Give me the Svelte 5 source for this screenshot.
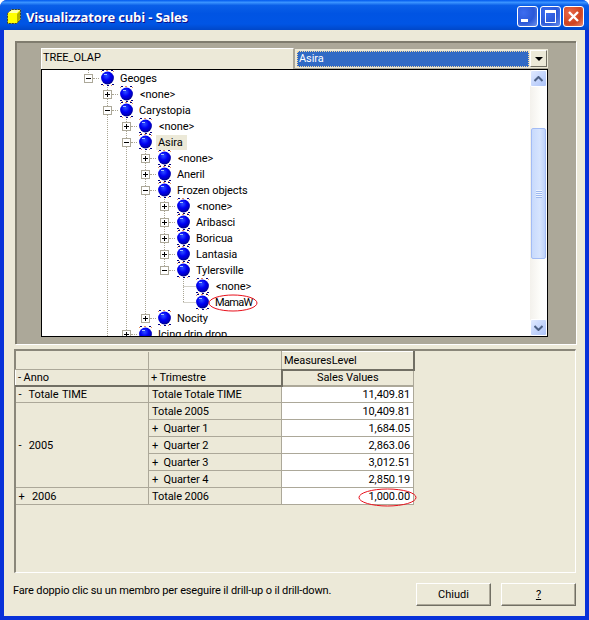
<script lang="ts">
	type Node = { label: string; depth: number; box?: '+' | '-'; selected?: boolean };

	const nodes: Node[] = [
		{ label: 'Geoges', depth: 0, box: '-' },
		{ label: '<none>', depth: 1, box: '+' },
		{ label: 'Carystopia', depth: 1, box: '-' },
		{ label: '<none>', depth: 2, box: '+' },
		{ label: 'Asira', depth: 2, box: '-', selected: true },
		{ label: '<none>', depth: 3, box: '+' },
		{ label: 'Aneril', depth: 3, box: '+' },
		{ label: 'Frozen objects', depth: 3, box: '-' },
		{ label: '<none>', depth: 4, box: '+' },
		{ label: 'Aribasci', depth: 4, box: '+' },
		{ label: 'Boricua', depth: 4, box: '+' },
		{ label: 'Lantasia', depth: 4, box: '+' },
		{ label: 'Tylersville', depth: 4, box: '-' },
		{ label: '<none>', depth: 5 },
		{ label: 'MamaW', depth: 5 },
		{ label: 'Nocity', depth: 3, box: '+' },
		{ label: 'Icing drip drop', depth: 2, box: '+' }
	];

	// vertical guides of the tree: x inside the list, first and last row
	const guides = [
		{ x: 46, y1: 0, y2: 9 },
		{ x: 65, y1: 9, y2: 267 },
		{ x: 84, y1: 41, y2: 267 },
		{ x: 103, y1: 73, y2: 249 },
		{ x: 122, y1: 121, y2: 201 },
		{ x: 141, y1: 201, y2: 233 }
	];

	const rows = [
		{ year: '-  Totale TIME', span: 1, quarter: 'Totale Totale TIME', value: '11,409.81' },
		{ year: '-  2005', span: 5, quarter: 'Totale 2005', value: '10,409.81' },
		{ quarter: '+  Quarter 1', value: '1,684.05' },
		{ quarter: '+  Quarter 2', value: '2,863.06' },
		{ quarter: '+  Quarter 3', value: '3,012.51' },
		{ quarter: '+  Quarter 4', value: '2,850.19' },
		{ year: '+  2006', span: 1, quarter: 'Totale 2006', value: '1,000.00', circled: true }
	];
</script>

{#snippet sphere()}
	<svg class="sphere" width="19" height="16" viewBox="0 0 19 16">
		<defs>
			<radialGradient id="ball" cx="0.42" cy="0.34" r="0.66">
				<stop offset="0" stop-color="#2c50ff" />
				<stop offset="0.5" stop-color="#0000f4" />
				<stop offset="0.85" stop-color="#0000b8" />
				<stop offset="1" stop-color="#000080" />
			</radialGradient>
		</defs>
		<circle cx="9.5" cy="8" r="6.4" fill="url(#ball)" />
		<rect x="6" y="4" width="3" height="1" fill="#a8c0ff" />
		<rect x="3" y="1" width="1" height="1" fill="#e8905a" />
		<rect x="4" y="0" width="2" height="1" fill="#000080" />
		<rect x="8" y="0" width="2" height="1" fill="#e8905a" />
		<rect x="13" y="0" width="2" height="1" fill="#000080" />
		<rect x="15" y="1" width="1" height="1" fill="#e8905a" />
		<rect x="3" y="14" width="2" height="1" fill="#000080" />
		<rect x="5" y="15" width="1" height="1" fill="#e8905a" />
		<rect x="9" y="15" width="2" height="1" fill="#000080" />
		<rect x="13" y="15" width="1" height="1" fill="#e8905a" />
		<rect x="14" y="14" width="2" height="1" fill="#000080" />
	</svg>
{/snippet}

<div class="window">
	<header class="titlebar">
		<svg class="cube" width="16" height="17" viewBox="0 0 16 17">
			<path d="M1.5 5.5 L5.5 1.5 H14.5 V11.5 L10.5 15.5 H1.5 Z" fill="#ffff00" stroke="#3a3a30" stroke-dasharray="2 1" />
			<path d="M2 5 L6 2 H14 L11 5 Z" fill="#ffffb0" />
			<path d="M11 6 L14 3 V11 L11 15 Z" fill="#b0b000" />
		</svg>
		<span class="title">Visualizzatore cubi - Sales</span>
		<div class="caption-buttons">
			<button class="cap" aria-label="minimize"><i class="min"></i></button>
			<button class="cap" aria-label="maximize"><i class="max"></i></button>
			<button class="cap close" aria-label="close">
				<svg width="13" height="13" viewBox="0 0 13 13"><path d="M2 2 L11 11 M11 2 L2 11" stroke="#fff" stroke-width="2.4" /></svg>
			</button>
		</div>
	</header>

	<main class="body">
		<section class="tree-panel">
			<div class="tree-head">
				<div class="cube-name">TREE_OLAP</div>
				<div class="combo">
					<div class="combo-value"><span>Asira</span></div>
					<div class="combo-arrow"><i></i></div>
				</div>
			</div>
			<div class="list">
				<div class="tree">
					<svg class="guides" width="490" height="267">
						{#each guides as g}
							<line x1={g.x + 0.5} x2={g.x + 0.5} y1={g.y1} y2={g.y2} />
						{/each}
						<line x1="141.5" x2="154" y1="216.5" y2="216.5" />
						<line x1="141.5" x2="154" y1="232.5" y2="232.5" />
					</svg>
					{#each nodes as node}
						<div class="node" style="padding-left: {42 + node.depth * 19}px">
							<span class="expander">
								{#if node.box}
									<span class="box">
										<i class="h"></i>
										{#if node.box === '+'}<i class="v"></i>{/if}
									</span>
									<span class="stub"></span>
								{/if}
							</span>
							{@render sphere()}
							<span class="label" class:selected={node.selected} class:none={node.label === '<none>'} class:tight={node.label === 'MamaW'}>
								{node.label}
								{#if node.label === 'MamaW'}
									<svg class="ring tree-ring" width="50" height="18" viewBox="0 0 50 18"><ellipse cx="25" cy="9" rx="24" ry="8" /></svg>
								{/if}
							</span>
						</div>
					{/each}
				</div>
				<div class="scrollbar">
					<div class="sb-btn">
						<svg width="9" height="6" viewBox="0 0 9 6"><path d="M0.5 5 L4.5 1 L8.5 5" fill="none" stroke="#4d6185" stroke-width="2" /></svg>
					</div>
					<div class="sb-track">
						<div class="sb-thumb"><i></i><i></i><i></i><i></i></div>
					</div>
					<div class="sb-btn">
						<svg width="9" height="6" viewBox="0 0 9 6"><path d="M0.5 1 L4.5 5 L8.5 1" fill="none" stroke="#4d6185" stroke-width="2" /></svg>
					</div>
				</div>
			</div>
		</section>

		<section class="grid-panel">
			<table>
				<colgroup>
					<col class="c1" />
					<col class="c2" />
					<col class="c3" />
				</colgroup>
				<thead>
					<tr class="head-top">
						<th></th>
						<th></th>
						<th class="raised">MeasuresLevel</th>
					</tr>
					<tr class="head-bottom">
						<th class="raised flat">- Anno</th>
						<th class="raised">+ Trimestre</th>
						<th class="measure">Sales Values</th>
					</tr>
				</thead>
				<tbody>
					{#each rows as row}
						<tr>
							{#if row.year}
								<td rowspan={row.span}><span class="pre year">{row.year}</span></td>
							{/if}
							<td><span class="pre">{row.quarter}</span></td>
							<td class="value">
								{row.value}
								{#if row.circled}
									<svg class="ring value-ring" width="59" height="19" viewBox="0 0 59 19"><ellipse cx="29.5" cy="9.5" rx="28.5" ry="8.5" /></svg>
								{/if}
							</td>
						</tr>
					{/each}
				</tbody>
			</table>
		</section>

		<footer class="foot">
			<p>Fare doppio clic su un membro per eseguire il drill-up o il drill-down.</p>
			<div class="actions">
				<button class="btn">Chiudi</button>
				<button class="btn"><u>?</u></button>
			</div>
		</footer>
	</main>
</div>

<style>
	:global(body) {
		margin: 0;
		background: #fff;
	}

	.window {
		width: 589px;
		height: 620px;
		display: flex;
		flex-direction: column;
		background: #0831d9;
		border-radius: 7px 7px 0 0;
		font-family: Roboto, 'Liberation Sans', sans-serif;
		font-size: 11px;
		letter-spacing: -0.08px;
		color: #000;
		overflow: hidden;
	}

	.titlebar {
		height: 30px;
		flex: none;
		box-sizing: border-box;
		display: flex;
		align-items: center;
		padding: 3px 5px 0 6px;
		background: linear-gradient(180deg, #0058ee 0%, #3a93ff 8%, #0a5fe8 18%, #0054e3 45%, #0055e5 80%, #0047c8 100%);
	}

	.cube {
		flex: none;
		margin-right: 4px;
	}

	.title {
		font-family: 'Open Sans', sans-serif;
		font-weight: 700;
		font-size: 13px;
		letter-spacing: -0.15px;
		color: #fff;
		text-shadow: 1px 1px 0 #0f1089;
	}

	.caption-buttons {
		margin-left: auto;
		display: flex;
		gap: 2px;
		margin-top: -1px;
	}

	.cap {
		width: 21px;
		height: 21px;
		padding: 0;
		border: 1px solid #fff;
		border-radius: 3px;
		background: radial-gradient(circle at 30% 30%, #3c6df0 0%, #2a58d8 55%, #6e93ec 100%);
		display: flex;
		align-items: center;
		justify-content: center;
	}

	.cap.close {
		background: radial-gradient(circle at 30% 30%, #e8694a 0%, #d0431f 60%, #e59078 100%);
	}

	.min {
		width: 7px;
		height: 3px;
		background: #fff;
		margin: 9px 6px 0 0;
	}

	.max {
		width: 9px;
		height: 9px;
		border: 1px solid #fff;
		border-top-width: 3px;
		box-sizing: content-box;
	}

	.body {
		flex: 1;
		min-height: 0;
		margin: 0 4px 4px;
		background: #ece9d8;
		padding: 11px 9px 0 11px;
		display: flex;
		flex-direction: column;
	}

	.tree-panel {
		height: 303px;
		flex: none;
		box-sizing: border-box;
		background: #aca899;
		border-top: 2px solid #7f7c6e;
		border-left: 2px solid #7f7c6e;
		padding: 5px 0 0 24px;
		box-shadow: 1px 1px 0 #fff;
	}

	.tree-head {
		display: flex;
		width: 507px;
		height: 21px;
	}

	.cube-name {
		width: 253px;
		flex: none;
		box-sizing: border-box;
		background: #ece9d8;
		border-top: 1px solid #fff;
		border-left: 1px solid #fff;
		border-right: 1px solid #aca899;
		padding: 2px 0 0 1px;
		line-height: 13px;
	}

	.combo {
		flex: 1;
		display: flex;
		box-sizing: border-box;
		margin: 1px 0 1px 1px;
		padding: 1px 1px 1px 2px;
		background: #ece9d8;
	}

	.combo-value {
		flex: 1;
		margin-top: 1px;
		background: #316ac5;
		color: #fff;
		outline: 1px dotted #f4d9a0;
		outline-offset: -1px;
		padding: 1px 0 0 2px;
		line-height: 13px;
	}

	.combo-arrow {
		width: 17px;
		margin-left: 1px;
		box-sizing: border-box;
		display: flex;
		align-items: center;
		justify-content: center;
		background: #ece9d8;
		border: 1px solid;
		border-color: #fff #716f64 #716f64 #fff;
	}

	.combo-arrow i {
		width: 0;
		height: 0;
		border: 4px solid transparent;
		border-top: 4px solid #000;
		border-bottom: 0;
	}

	.list {
		width: 507px;
		height: 268px;
		box-sizing: border-box;
		background: #fff;
		border: 1px solid #000;
		display: flex;
	}

	.tree {
		flex: 1;
		min-width: 0;
		position: relative;
		overflow: hidden;
		height: 266px;
	}

	.guides {
		position: absolute;
		left: 0;
		top: 0;
	}

	.guides line {
		stroke: #a9a594;
		stroke-width: 1;
		stroke-dasharray: 1 1;
	}

	.node {
		height: 16px;
		display: flex;
		align-items: center;
		position: relative;
	}

	.expander {
		width: 15px;
		height: 16px;
		flex: none;
		display: flex;
		align-items: center;
	}

	.box {
		width: 9px;
		height: 9px;
		box-sizing: border-box;
		flex: none;
		border: 1px solid #aca899;
		background: #fff;
		position: relative;
	}

	.box i {
		position: absolute;
		background: #000;
	}

	.box .h {
		left: 1px;
		top: 3px;
		width: 5px;
		height: 1px;
	}

	.box .v {
		left: 3px;
		top: 1px;
		width: 1px;
		height: 5px;
	}

	.stub {
		width: 6px;
		flex: none;
		border-top: 1px dotted #a9a594;
	}

	.sphere {
		flex: none;
		display: block;
		margin-left: -1px;
	}

	.label {
		position: relative;
		margin-left: 1px;
		padding: 1px 2px;
		line-height: 13px;
		white-space: pre;
	}

	.label.none {
		margin-left: 2px;
	}

	.label.tight {
		letter-spacing: -0.7px;
	}

	.label.selected {
		background: #ece9d8;
	}

	.ring {
		position: absolute;
		pointer-events: none;
	}

	.ring ellipse {
		fill: none;
		stroke: #e8101c;
		stroke-width: 1;
	}

	.tree-ring {
		left: -5px;
		top: -1px;
	}

	.value-ring {
		right: -4px;
		top: 0;
	}

	.scrollbar {
		width: 17px;
		flex: none;
		display: flex;
		flex-direction: column;
		background: linear-gradient(90deg, #f3f1ec 0%, #fdfdfa 60%, #fff 100%);
	}

	.sb-btn {
		height: 17px;
		flex: none;
		box-sizing: border-box;
		display: flex;
		align-items: center;
		justify-content: center;
		border: 1px solid #fff;
		border-radius: 2px;
		background: linear-gradient(135deg, #e1eafe 0%, #c0d2fb 60%, #aec4f8 100%);
	}

	.sb-track {
		flex: 1;
		padding-top: 41px;
	}

	.sb-thumb {
		height: 131px;
		box-sizing: border-box;
		margin: 0 1px;
		border: 1px solid #a3bcf5;
		border-radius: 2px;
		background: linear-gradient(90deg, #c8dafc 0%, #d6e4fe 60%, #bed2fb 100%);
		display: flex;
		flex-direction: column;
		justify-content: center;
		align-items: center;
		gap: 1px;
	}

	.sb-thumb i {
		width: 6px;
		height: 1px;
		background: #eef4ff;
		box-shadow: 0 1px 0 #9db8ef;
	}

	.grid-panel {
		margin-top: 5px;
		margin-left: -1px;
		width: 562px;
		height: 224px;
		flex: none;
		box-sizing: border-box;
		border-top: 2px solid #8a877a;
		border-left: 2px solid #8a877a;
		border-right: 1px solid #fff;
		border-bottom: 1px solid #fff;
	}

	table {
		border-collapse: collapse;
		table-layout: fixed;
		width: 398px;
		margin-left: -1px;
		font-size: 11px;
	}

	.c1,
	.c2 {
		width: 133px;
	}

	.c3 {
		width: 132px;
	}

	th,
	td {
		height: 17px;
		box-sizing: border-box;
		padding: 0 2px;
		font-weight: 400;
		text-align: left;
		border-right: 1px solid #aca899;
		border-bottom: 1px solid #aca899;
		line-height: 13px;
		white-space: nowrap;
	}

	.head-top th {
		height: 18px;
	}

	.head-bottom th {
		height: 16px;
	}

	th.raised {
		border-top: 1px solid #fff;
		border-left: 1px solid #fff;
		border-right: 2px solid #716f64;
		border-bottom: 2px solid #716f64;
	}

	th.raised.flat {
		border-right: 1px solid #aca899;
	}

	th.measure {
		text-align: center;
		border-bottom: 2px solid #aca899;
	}

	td {
		padding-left: 3px;
	}

	.pre {
		white-space: pre;
	}

	.pre.year {
		word-spacing: 1px;
	}

	td.value {
		background: #fff;
		text-align: right;
		padding-right: 3px;
		position: relative;
	}

	.foot {
		flex: 1;
		display: flex;
		justify-content: space-between;
		padding: 10px 0 0 0;
		margin-left: -2px;
	}

	.foot p {
		margin: 0;
		padding-top: 1px;
		line-height: 13px;
		letter-spacing: -0.14px;
	}

	.actions {
		display: flex;
		gap: 10px;
	}

	.btn {
		width: 75px;
		height: 23px;
		padding: 0;
		font: inherit;
		color: #000;
		background: #ece9d8;
		border: 1px solid;
		border-color: #fff #716f64 #716f64 #fff;
		box-shadow: inset -1px -1px 0 #aca899;
	}
</style>
